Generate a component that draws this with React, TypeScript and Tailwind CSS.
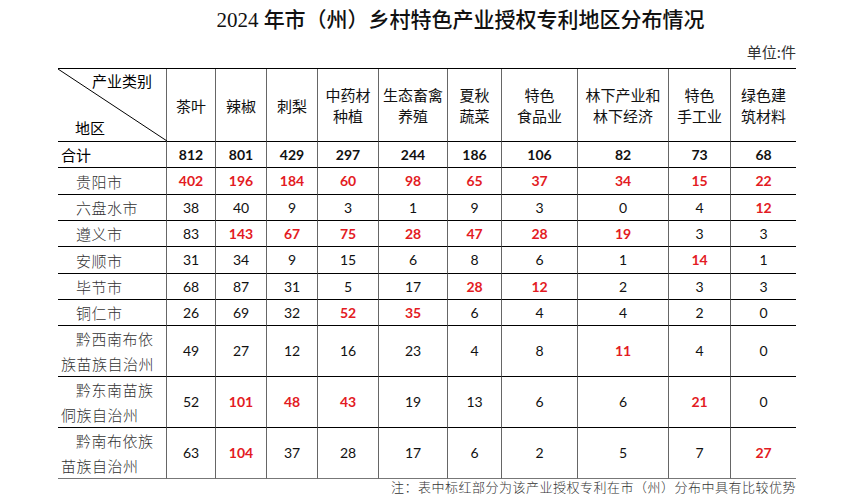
const cols = [
  { w: 'w-[49px]', label: ['茶叶'] },
  { w: 'w-[51px]', label: ['辣椒'] },
  { w: 'w-[51px]', label: ['刺梨'] },
  { w: 'w-[61px]', label: ['中药材', '种植'] },
  { w: 'w-[69px]', label: ['生态畜禽', '养殖'] },
  { w: 'w-[54px]', label: ['夏秋', '蔬菜'] },
  { w: 'w-[76px]', label: ['特色', '食品业'] },
  { w: 'w-[91px]', label: ['林下产业和', '林下经济'] },
  { w: 'w-[62px]', label: ['特色', '手工业'] },
  { w: 'w-[65px]', label: ['绿色建', '筑材料'] },
];

// value ending in "*" = marked red
const rows: { name: string[]; h: string; vals: string[] }[] = [
  { name: ['贵阳市'], h: 'h-[27px]', vals: ['402*', '196*', '184*', '60*', '98*', '65*', '37*', '34*', '15*', '22*'] },
  { name: ['六盘水市'], h: 'h-[26px]', vals: ['38', '40', '9', '3', '1', '9', '3', '0', '4', '12*'] },
  { name: ['遵义市'], h: 'h-[26px]', vals: ['83', '143*', '67*', '75*', '28*', '47*', '28*', '19*', '3', '3'] },
  { name: ['安顺市'], h: 'h-[27px]', vals: ['31', '34', '9', '15', '6', '8', '6', '1', '14*', '1'] },
  { name: ['毕节市'], h: 'h-[26px]', vals: ['68', '87', '31', '5', '17', '28*', '12*', '2', '3', '3'] },
  { name: ['铜仁市'], h: 'h-[26px]', vals: ['26', '69', '32', '52*', '35*', '6', '4', '4', '2', '0'] },
  { name: ['黔西南布依', '族苗族自治州'], h: 'h-[50px]', vals: ['49', '27', '12', '16', '23', '4', '8', '11*', '4', '0'] },
  { name: ['黔东南苗族', '侗族自治州'], h: 'h-[50px]', vals: ['52', '101*', '48*', '43*', '19', '13', '6', '6', '21*', '0'] },
  { name: ['黔南布依族', '苗族自治州'], h: 'h-[50px]', vals: ['63', '104*', '37', '28', '17', '6', '2', '5', '7', '27*'] },
];

const totals = ['812', '801', '429', '297', '244', '186', '106', '82', '73', '68'];

const cjk = "font-['Noto_Sans_CJK_SC',sans-serif]";
const num = "font-['Lato','Noto_Sans',sans-serif]";

export default function App() {
  return (
    <div className="w-[847px] h-[501px] bg-white relative overflow-hidden text-black">
      <h1 className={`${cjk} text-[21px] font-medium leading-[26px] text-center pt-[5px] pl-[74px] text-[#111]`}>
        <span className="font-['Liberation_Serif',serif] font-normal text-[21px]">2024 </span>
        年市（州）乡村特色产业授权专利地区分布情况
      </h1>

      <div className="ml-[58px] w-[738px]">
        <div className={`${cjk} text-right text-[15px] leading-[20px] mt-[9px] mb-[6px] text-[#333]`}>单位:件</div>

        <table className="border-separate border-spacing-0 table-fixed w-[738px] border-t border-black">
          <colgroup>
            <col className="w-[109px]" />
            {cols.map((c, i) => (
              <col key={i} className={c.w} />
            ))}
          </colgroup>
          <thead>
            <tr className="h-[73px]">
              <th className="relative p-0 border-b border-r border-black border-r-[#666] font-normal">
                <svg className="absolute inset-0" width="109" height="72" viewBox="0 0 109 72">
                  <line x1="0" y1="0" x2="109" y2="72" stroke="#000" strokeWidth="1" />
                </svg>
                <div className={`${cjk} text-[15px] leading-[20px] h-[72px] relative`}>
                  <span className="absolute right-[14px] top-[2px]">产业类别</span>
                  <span className="absolute left-[17px] bottom-[3px]">地区</span>
                </div>
              </th>
              {cols.map((c, i) => (
                <th
                  key={i}
                  className={`${cjk} p-0 border-b border-black font-normal text-[15px] leading-[21px] text-center align-middle text-[#111] ${
                    i < cols.length - 1 ? 'border-r border-r-[#666]' : ''
                  }`}
                >
                  {c.label.map((l, j) => (
                    <div key={j} className="whitespace-nowrap">
                      {l}
                    </div>
                  ))}
                </th>
              ))}
            </tr>
          </thead>
          <tbody>
            <tr className="h-[26px]">
              <td className={`${cjk} p-0 pl-[3px] border-b border-r border-black border-r-[#666] text-[15px] leading-[20px]`}>合计</td>
              {totals.map((v, i) => (
                <td
                  key={i}
                  className={`${num} p-0 border-b border-black text-center text-[14px] font-bold leading-[20px] text-[#111] ${
                    i < totals.length - 1 ? 'border-r border-r-[#666]' : ''
                  }`}
                >
                  {v}
                </td>
              ))}
            </tr>
            {rows.map((r, ri) => (
              <tr key={ri} className={r.h}>
                <td
                  className={`${cjk} p-0 pl-[3px] border-r border-r-[#666] font-light text-[15px] leading-[25px] text-[#333] tracking-[0.5px] ${
                    ri === rows.length - 1 ? 'border-b border-b-[#777]' : 'border-b border-black'
                  }`}
                >
                  {r.name.map((n, j) => (
                    <div key={j} className={j === 0 ? 'pl-[15px] whitespace-nowrap' : 'whitespace-nowrap'}>
                      {n}
                    </div>
                  ))}
                </td>
                {r.vals.map((v, i) => {
                  const red = v.endsWith('*');
                  return (
                    <td
                      key={i}
                      className={`${num} p-0 text-center text-[14px] leading-[20px] ${
                        red ? 'text-[#e31b23] font-bold' : 'text-[#111]'
                      } ${i < r.vals.length - 1 ? 'border-r border-r-[#666]' : ''} ${
                        ri === rows.length - 1 ? 'border-b border-b-[#777]' : 'border-b border-black'
                      }`}
                    >
                      {red ? v.slice(0, -1) : v}
                    </td>
                  );
                })}
              </tr>
            ))}
          </tbody>
        </table>

        <p className={`${cjk} text-right text-[13px] leading-[20px] -mt-[2px] text-[#333] font-light tracking-[0.5px]`}>
          注：表中标红部分为该产业授权专利在市（州）分布中具有比较优势
        </p>
      </div>
    </div>
  );
}
